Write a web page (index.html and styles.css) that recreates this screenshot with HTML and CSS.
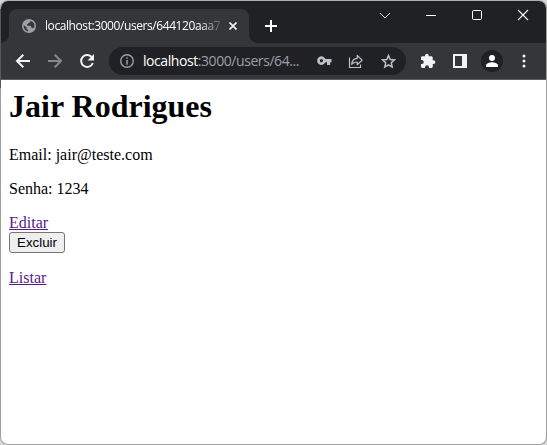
FILE: index.html
```html
<!DOCTYPE html>
<html lang="pt-BR">
<head>
<meta charset="utf-8">
<title>Jair Rodrigues</title>
<link rel="stylesheet" href="styles.css">
</head>
<body>
<div class="window">
  <header class="tabstrip">
    <div class="tab">
      <svg class="globe" width="14" height="14" viewBox="0 0 14 14"><circle cx="7" cy="7" r="7" fill="#9aa0a6"/><path d="M1.6 6.1 4.6 8.6V10l1.6 1.2v1.2C3.4 12 1.5 9.800 1.600 6.100ZM8.300 1.700c.5 1.600-.5 2-1.600 2.100-.6 1.100-.7 1.400-1.700 1.500v1.500h3.500l1.100 1.900h1.500l.7.7c1-1.700.8-4.200-.6-5.800-.8-1-1.800-1.600-2.900-1.900Z" fill="#35363a"/></svg>
      <span class="tab-title">localhost:3000/users/644120aaa7</span>
      <svg class="tab-close" width="8" height="8" viewBox="0 0 8 8"><path d="m.5.5 7 7m0-7-7 7" stroke="#f1f3f4" stroke-width="1.7"/></svg>
    </div>
    <svg class="new-tab" width="12" height="12" viewBox="0 0 12 12"><path d="M6 0v12M0 6h12" stroke="#fff" stroke-width="2"/></svg>
    <div class="controls">
      <svg width="46" height="30" viewBox="0 0 46 30"><path d="m18 12 5 5 5-5" fill="none" stroke="#dedfe0"/></svg>
      <svg width="46" height="30" viewBox="0 0 46 30"><path d="M18 14.500h10" stroke="#fff"/></svg>
      <svg width="46" height="30" viewBox="0 0 46 30"><rect x="18.500" y="9.500" width="9" height="9" rx="1.200" fill="none" stroke="#fff"/></svg>
      <svg width="46" height="30" viewBox="0 0 46 30"><path d="m18 9 10 10m0-10L18 19" stroke="#fff" stroke-width="1.100"/></svg>
    </div>
  </header>
  <nav class="toolbar">
    <div class="nav-buttons">
      <svg width="16" height="16" viewBox="0 0 16 16"><path d="M15 8H2.500M8.300 1.700 2 8l6.300 6.300" fill="none" stroke="#f1f3f4" stroke-width="2"/></svg>
      <svg width="16" height="16" viewBox="0 0 16 16"><path d="M1 8h12.500M7.700 1.700 14 8l-6.300 6.300" fill="none" stroke="#85878a" stroke-width="2"/></svg>
      <svg width="16" height="16" viewBox="0 0 16 16"><path d="M13.200 4.700A6 6 0 1 0 13.800 10" fill="none" stroke="#f1f3f4" stroke-width="2"/><path d="M15 1v6.500H8.500Z" fill="#f1f3f4"/></svg>
    </div>
    <div class="address">
      <svg class="info" width="14" height="14" viewBox="0 0 14 14"><circle cx="7" cy="7" r="6.300" fill="none" stroke="#9aa0a6" stroke-width="1.400"/><path d="M7 3.200v1.500M7 6v4.700" stroke="#9aa0a6" stroke-width="1.500"/></svg>
      <span class="url"><b>localhost</b>:3000/users/64...</span>
      <svg class="key" width="15" height="10" viewBox="0 0 15 10"><path fill-rule="evenodd" d="M8.400 3A4.300 4.300 0 1 0 8.400 6.300H10V9h3.200V6.300H14.500V3ZM4.400 3.100a1.600 1.600 0 1 1 0 3.200 1.600 1.600 0 0 1 0-3.200Z" fill="#bdc1c6"/></svg>
      <svg class="share" width="16" height="15" viewBox="0 0 16 15"><path d="M1.500 3.500v10h11v-3M9.200 1.500v2.800C6 4.500 4 6.700 3.700 10.300 5.200 8.700 6.900 8 9.200 8v2.700l5-4.600Z" fill="none" stroke="#bdc1c6" stroke-width="1.200" stroke-linejoin="round"/></svg>
      <svg class="star" width="15" height="15" viewBox="0 0 15 15"><path d="m7.500 1.500 1.700 4 4.300.4-3.200 2.900.9 4.200-3.700-2.200L3.800 13l.9-4.200-3.200-2.900 4.300-.4Z" fill="none" stroke="#bdc1c6" stroke-width="1.500"/></svg>
    </div>
    <div class="extras">
      <svg class="puzzle" width="16" height="16" viewBox="0 0 16 16"><path d="M13.400 7.200h-.7V4.600c0-.8-.6-1.400-1.400-1.400H8.700V2.500a1.800 1.800 0 0 0-3.600 0v.7H2.400C1.600 3.200 1 3.800 1 4.600v2.300h.8a2 2 0 0 1 0 4H1v2.700c0 .8.6 1.400 1.400 1.400H5v-.8a2 2 0 0 1 4 0v.8h2.400c.8 0 1.400-.6 1.400-1.400v-2.700h.7a1.850 1.850 0 0 0 0-3.700Z" fill="#f1f3f4"/></svg>
      <svg class="panel" width="14" height="14" viewBox="0 0 14 14"><path fill-rule="evenodd" d="M0 0h14v14H0ZM2 2v10h7V2Z" fill="#f1f3f4"/></svg>
      <span class="avatar"><svg width="12" height="12" viewBox="0 0 12 12"><circle cx="6" cy="3" r="3" fill="#fff"/><path d="M0 12v-1.800C0 8.200 4 7.200 6 7.200s6 1 6 3V12Z" fill="#fff"/></svg></span>
      <svg class="dots" width="4" height="14" viewBox="0 0 4 14"><g fill="#f1f3f4"><circle cx="2" cy="2" r="1.500"/><circle cx="2" cy="7" r="1.500"/><circle cx="2" cy="12" r="1.500"/></g></svg>
    </div>
  </nav>
  <main class="page">
    <h1>Jair Rodrigues</h1>
    <p>Email: jair@teste.com</p>
    <p>Senha: 1234</p>
    <a href="#">Editar</a>
    <button type="button">Excluir</button>
    <a href="#">Listar</a>
  </main>
</div>
</body>
</html>
```
FILE: styles.css
```css
* { box-sizing: border-box; }
body { margin: 0; background: #d5d7d7; overflow: hidden; }
svg { display: block; flex: none; }
.window {
  position: relative;
  width: 547px;
  height: 445px;
  border: 1px solid #a0a0a0;
  border-top-color: #a9b0ae;
  border-radius: 8px;
  background: #fff;
}
/* darker window edge beside the title bar */
.window::before {
  content: "";
  position: absolute;
  top: 8px;
  left: -1px;
  width: 1px;
  height: 79px;
  background: #58595b;
}
.tabstrip {
  display: flex;
  height: 42px;
  padding: 8px 0 0 8px;
  border-radius: 7px 7px 0 0;
  background: #202124;
}
.tab {
  position: relative;
  display: flex;
  align-items: center;
  width: 240px;
  height: 34px;
  padding: 0 12px 0 13px;
  border-radius: 8px 8px 0 0;
  background: #35363a;
}
.tab::before,
.tab::after {
  content: "";
  position: absolute;
  bottom: 0;
  width: 8px;
  height: 8px;
}
.tab::before { left: -8px; background: radial-gradient(circle at 0 0, transparent 7.5px, #35363a 8px); }
.tab::after { right: -8px; background: radial-gradient(circle at 100% 0, transparent 7.5px, #35363a 8px); }
.tab-title {
  width: 176px;
  margin-left: 9px;
  overflow: hidden;
  white-space: nowrap;
  font: 12px/18px "Open Sans", sans-serif;
  letter-spacing: -0.42px;
  color: #fff;
  -webkit-mask-image: linear-gradient(90deg, #000 154px, transparent 180px);
  mask-image: linear-gradient(90deg, #000 154px, transparent 180px);
}
.tab-close { margin-left: 8px; }
.new-tab { margin: 11px 0 0 16px; }
.controls { display: flex; margin: -8px 0 0 auto; }
.toolbar {
  display: flex;
  align-items: center;
  height: 37px;
  border-bottom: 1px solid #5b5c5f;
  background: #35363a;
}
.nav-buttons { display: flex; gap: 16px; margin-left: 14px; }
.address {
  display: flex;
  align-items: center;
  width: 297px;
  height: 28px;
  margin-left: 14px;
  padding-left: 11px;
  border-radius: 14px;
  background: #202124;
}
.url {
  width: 165px;
  margin-left: 9px;
  white-space: nowrap;
  font: 14px/20px "Open Sans", sans-serif;
  letter-spacing: -0.43px;
  color: #9aa0a6;
}
.url b { font-weight: 400; color: #fff; }
.key { margin-left: 9px; }
.share { margin-left: 16px; }
.star { margin-left: 17px; }
.extras { display: flex; align-items: center; margin-left: 14px; }
.panel { margin-left: 17px; }
.avatar {
  display: grid;
  place-items: center;
  width: 22px;
  height: 22px;
  margin-left: 14px;
  border-radius: 50%;
  background: #202124;
}
.dots { margin-left: 19px; }
.page {
  display: flex;
  flex-direction: column;
  align-items: flex-start;
  padding: 8px;
  font: 16px/18px "Liberation Serif", serif;
  color: #000;
}
.page h1 { margin: 0 0 21px; font-size: 32px; line-height: 37px; }
.page p { margin: 0 0 16px; }
.page a { color: #551a8b; }
.page button {
  height: 21px;
  margin-bottom: 16px;
  padding: 1px 7px;
  border: 1px solid #767676;
  border-radius: 3px;
  background: #efefef;
  font: 13.333px/15px "Liberation Sans", sans-serif;
  color: #000;
}
```
